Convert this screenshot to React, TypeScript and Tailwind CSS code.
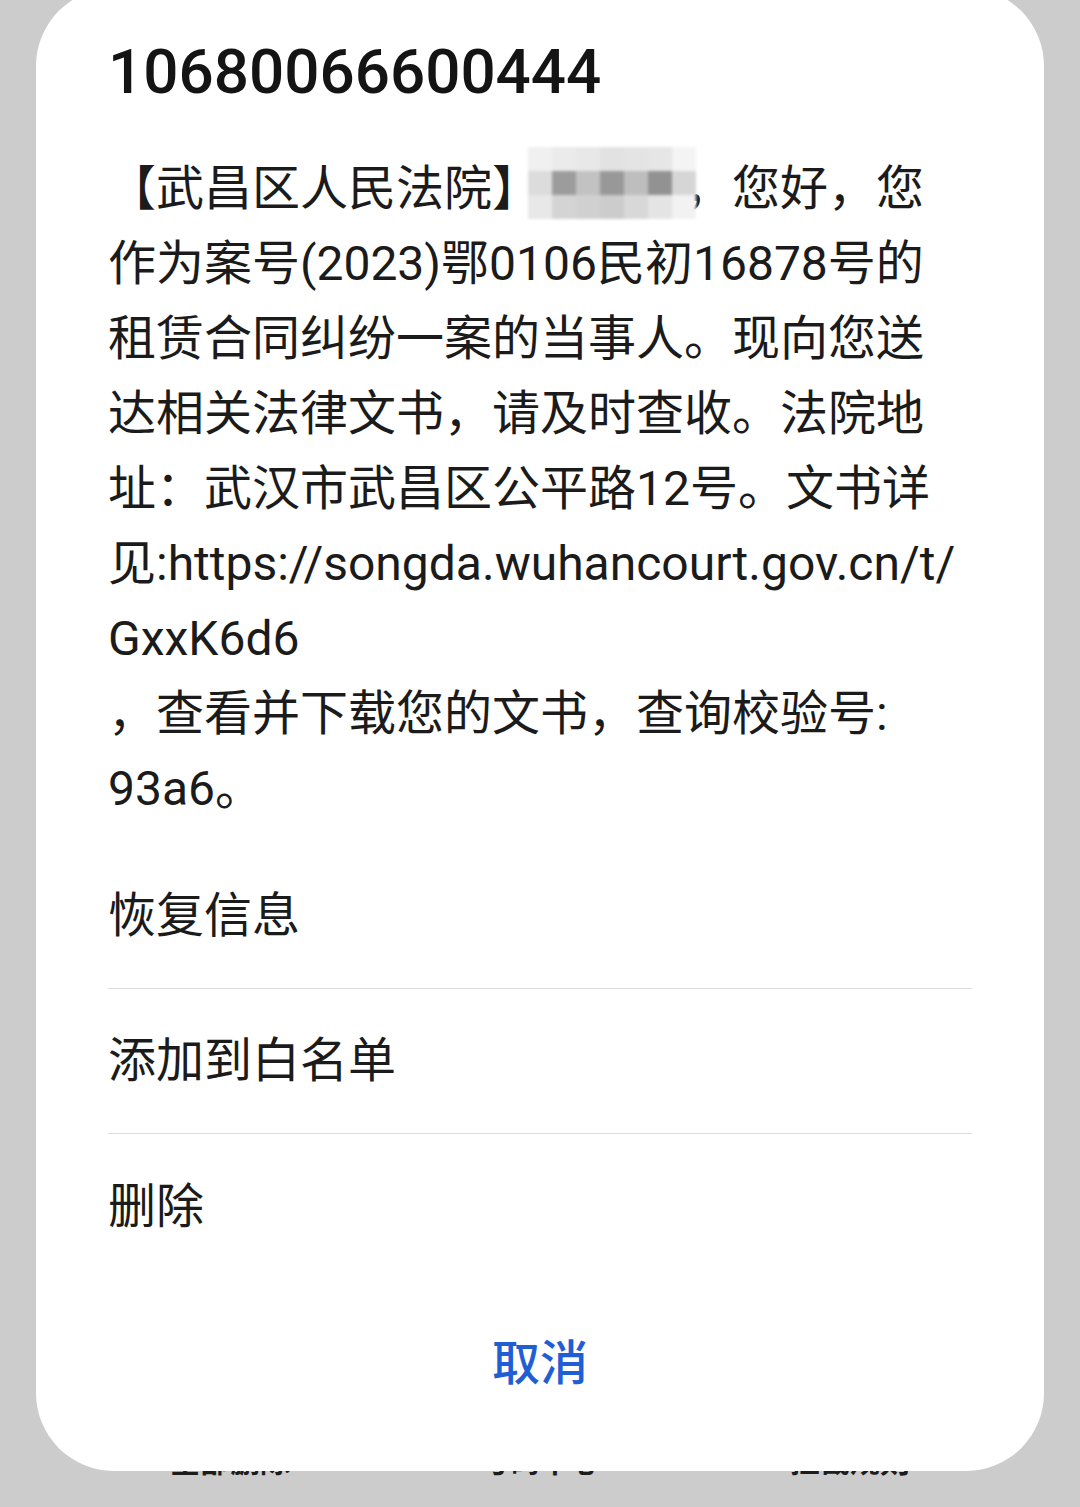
import type { ReactNode } from "react";

const FONT = "font-[Roboto,'Noto_Sans_CJK_SC',sans-serif]";

const bodyLines = [
  "作为案号(2023)鄂0106民初16878号的",
  "租赁合同纠纷一案的当事人。现向您送",
  "达相关法律文书，请及时查收。法院地",
  "址：武汉市武昌区公平路12号。文书详",
  "见:https://songda.wuhancourt.gov.cn/t/",
  "GxxK6d6",
  "，查看并下载您的文书，查询校验号:",
  "93a6。",
];

const actions = ["恢复信息", "添加到白名单", "删除"];

// pixelated name, 7 x 3 tiles
const tiles = [
  ["#f0f0f0", "#ebebeb", "#e8e8e8", "#e2e2e2", "#e4e4e4", "#e6e6e6", "#f4f4f4"],
  ["#dcdcdc", "#9c9c9c", "#c2c2c2", "#989898", "#bebebe", "#929292", "#d6d6d6"],
  ["#e8e8e8", "#d4d4d4", "#d0d0d0", "#cccccc", "#d8d8d8", "#e4e4e4", "#f2f2f2"],
];

function Mosaic() {
  return (
    <div className="pointer-events-none absolute top-[-4px] left-[-12px] grid grid-cols-[repeat(7,24px)] grid-rows-[repeat(3,24px)] blur-[1.5px]">
      {tiles.flat().map((color, i) => (
        <div key={i} className="size-full" style={{ backgroundColor: color }} />
      ))}
    </div>
  );
}

function ActionRow({ children, last }: { children: ReactNode; last?: boolean }) {
  return (
    <button
      type="button"
      className={`flex h-[145px] w-full items-center text-left text-[48px] text-[#1b1b1b] ${
        last ? "" : "border-b border-[#dcdcdc]"
      }`}
    >
      {children}
    </button>
  );
}

export default function App() {
  return (
    <div className={`relative h-[1507px] w-[1080px] overflow-hidden bg-[#cccccc] ${FONT}`}>
      {/* toolbar of the page behind the dialog */}
      <div className="flex h-full flex-col">
        <div className="flex-1" />
        <div className="grid grid-cols-3 px-[75px] pb-[25px] text-center text-[30px] leading-[40px] font-bold text-[#1c1c1c]">
          <span>全部删除</span>
          <span>号码中心</span>
          <span>拦截规则</span>
        </div>
      </div>

      {/* message dialog */}
      <div className="absolute top-[-12px] left-[36px] flex h-[1483px] w-[1008px] flex-col rounded-[78px] bg-white px-[72px] pt-[48px]">
        <h1 className="text-[62px] leading-[72px] font-medium text-[#141414]">10680066600444</h1>

        <div className="mt-[43px] text-[48px] leading-[75px] whitespace-nowrap text-[#1b1b1b]">
          <div className="flex">
            <span>【武昌区人民法院】</span>
            <span className="relative w-[144px]">
              <Mosaic />
            </span>
            <span>，您好，您</span>
          </div>
          {bodyLines.map((line) => (
            <div key={line}>{line}</div>
          ))}
        </div>

        <div className="mt-[18px] flex flex-col">
          {actions.map((label, i) => (
            <ActionRow key={label} last={i === actions.length - 1}>
              {label}
            </ActionRow>
          ))}
        </div>

        <button
          type="button"
          className="mt-[12px] h-[145px] w-full text-center text-[48px] font-medium text-[#1f5ed3]"
        >
          取消
        </button>
      </div>
    </div>
  );
}
